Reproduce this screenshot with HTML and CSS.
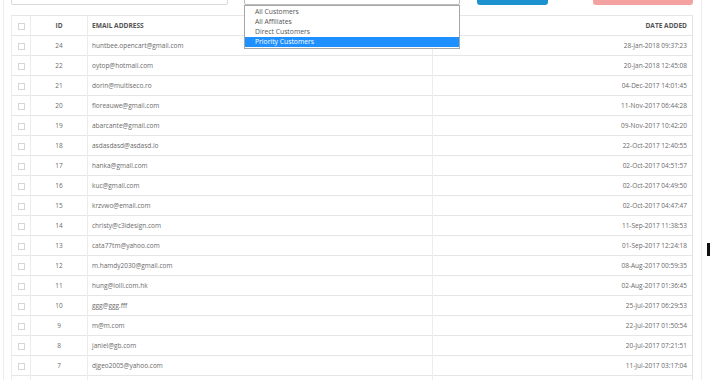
FILE: index.html
```html
<!DOCTYPE html>
<html lang="en">
	<head>
		<meta charset="UTF-8" />
		<title>Customers</title>
		<link rel="stylesheet" href="styles.css">
	</head>
	<body>
		<div class="panel">
			<div class="toolbar">
				<input type="text" class="search" />
				<div class="picker">
					<div class="select"></div>
					<ul class="options">
						<li>All Customers</li>
						<li>All Affiliates</li>
						<li>Direct Customers</li>
						<li class="active">Priority Customers</li>
					</ul>
				</div>
				<button class="btn btn-primary"></button>
				<button class="btn btn-danger"></button>
			</div>

			<table class="list">
				<thead>
					<tr>
						<th class="check"><span class="box"></span></th>
						<th class="id">ID</th>
						<th class="email">EMAIL ADDRESS</th>
						<th class="date">DATE ADDED</th>
					</tr>
				</thead>
				<tbody>
					<tr><td class="check"><span class="box"></span></td><td class="id">24</td><td class="email">huntbee.opencart@gmail.com</td><td class="date">28-Jan-2018 09:37:23</td></tr>
					<tr><td class="check"><span class="box"></span></td><td class="id">22</td><td class="email">oytop@hotmail.com</td><td class="date">20-Jan-2018 12:45:08</td></tr>
					<tr><td class="check"><span class="box"></span></td><td class="id">21</td><td class="email">dorin@multiseco.ro</td><td class="date">04-Dec-2017 14:01:45</td></tr>
					<tr><td class="check"><span class="box"></span></td><td class="id">20</td><td class="email">floreauwe@gmail.com</td><td class="date">11-Nov-2017 06:44:28</td></tr>
					<tr><td class="check"><span class="box"></span></td><td class="id">19</td><td class="email">abarcante@gmail.com</td><td class="date">09-Nov-2017 10:42:20</td></tr>
					<tr><td class="check"><span class="box"></span></td><td class="id">18</td><td class="email">asdasdasd@asdasd.lo</td><td class="date">22-Oct-2017 12:40:55</td></tr>
					<tr><td class="check"><span class="box"></span></td><td class="id">17</td><td class="email">hanka@gmail.com</td><td class="date">02-Oct-2017 04:51:57</td></tr>
					<tr><td class="check"><span class="box"></span></td><td class="id">16</td><td class="email">kuc@gmail.com</td><td class="date">02-Oct-2017 04:49:50</td></tr>
					<tr><td class="check"><span class="box"></span></td><td class="id">15</td><td class="email">krzvwo@email.com</td><td class="date">02-Oct-2017 04:47:47</td></tr>
					<tr><td class="check"><span class="box"></span></td><td class="id">14</td><td class="email">christy@c3idesign.com</td><td class="date">11-Sep-2017 11:38:53</td></tr>
					<tr><td class="check"><span class="box"></span></td><td class="id">13</td><td class="email">cata77tm@yahoo.com</td><td class="date">01-Sep-2017 12:24:18</td></tr>
					<tr><td class="check"><span class="box"></span></td><td class="id">12</td><td class="email">m.hamdy2030@gmail.com</td><td class="date">08-Aug-2017 00:59:35</td></tr>
					<tr><td class="check"><span class="box"></span></td><td class="id">11</td><td class="email">hung@lolli.com.hk</td><td class="date">02-Aug-2017 01:36:45</td></tr>
					<tr><td class="check"><span class="box"></span></td><td class="id">10</td><td class="email">ggg@ggg.fff</td><td class="date">25-Jul-2017 06:29:53</td></tr>
					<tr><td class="check"><span class="box"></span></td><td class="id">9</td><td class="email">m@m.com</td><td class="date">22-Jul-2017 01:50:54</td></tr>
					<tr><td class="check"><span class="box"></span></td><td class="id">8</td><td class="email">janiel@gb.com</td><td class="date">20-Jul-2017 07:21:51</td></tr>
					<tr><td class="check"><span class="box"></span></td><td class="id">7</td><td class="email">djgeo2005@yahoo.com</td><td class="date">11-Jul-2017 03:17:04</td></tr>
					<tr><td class="check">&nbsp;</td><td class="id">&nbsp;</td><td class="email">&nbsp;</td><td class="date">&nbsp;</td></tr>
				</tbody>
			</table>
		</div>
		<span class="cursor"></span>
	</body>
</html>
```

FILE: styles.css
```css
body {
	margin: 0 8px 0 3px;
	font-family: "Open Sans", Arial, sans-serif;
	font-size: 6.5px;
	color: #6a6a6a;
	background: #fff;
	overflow: hidden;
}
.panel {
	margin-top: -26px;
	border-left: 1px solid #ececec;
	border-right: 1px solid #ececec;
	padding: 0 7px;
	height: 420px;
}
.toolbar {
	display: flex;
	align-items: flex-end;
	height: 31px;
}
.search {
	width: 217px;
	height: 31px;
	box-sizing: border-box;
	border: 1px solid #d9d9d9;
	border-radius: 2px;
	margin: 0 16px 0 0;
	padding: 0;
}
.picker {
	position: relative;
	width: 216px;
	height: 31px;
	margin-right: 17px;
}
.select {
	height: 31px;
	box-sizing: border-box;
	border: 1px solid #bdbdbd;
	border-radius: 2px;
}
.options {
	position: absolute;
	top: 31px;
	left: 0;
	right: 0;
	margin: 0;
	padding: 1px 0 1px;
	list-style: none;
	background: #fff;
	border: 1px solid #a6a6a6;
	z-index: 5;
}
.options li {
	height: 10px;
	line-height: 10px;
	padding-left: 10px;
	font-size: 6.8px;
	color: #555;
}
.options li.active {
	background: #1e90ff;
	color: #fff;
}
.btn {
	height: 31px;
	border: none;
	border-radius: 3px;
	padding: 0;
}
.btn-primary {
	width: 71px;
	background: #1e91cf;
	margin-right: 45px;
}
.btn-danger {
	width: 100px;
	background: #f4a1a1;
}
.list {
	width: 682px;
	margin-top: 10px;
	border-collapse: collapse;
	border: 1px solid #e3e3e3;
}
.list th,
.list td {
	height: 19px;
	padding: 0;
	border-top: 1px solid #e6e6e6;
	border-left: 1px solid #ececec;
	line-height: 19px;
	white-space: nowrap;
}
.list th {
	font-weight: bold;
	color: #555;
	font-size: 6.6px;
}
.check {
	width: 18px;
	text-align: center;
}
.id {
	width: 56px;
	text-align: center;
}
.email {
	width: 340px;
	text-align: left;
	padding-left: 4px !important;
}
.date {
	text-align: right;
	padding-right: 5px !important;
}
.box {
	display: inline-block;
	width: 5px;
	height: 5px;
	border: 1px solid #d6d6d6;
	vertical-align: middle;
}
.cursor {
	position: absolute;
	left: 707px;
	top: 243px;
	width: 3px;
	height: 13px;
	background: #111;
}
```
